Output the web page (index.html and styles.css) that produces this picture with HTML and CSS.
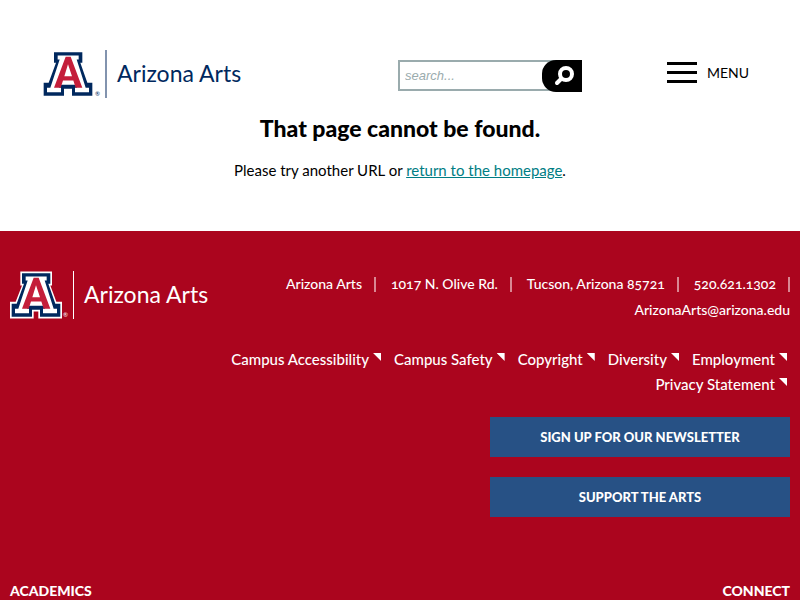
FILE: index.html
```html
<!DOCTYPE html>
<html lang="en">
<head>
<meta charset="utf-8">
<meta name="viewport" content="width=device-width, initial-scale=1">
<title>Page not found | Arizona Arts</title>
<link rel="stylesheet" href="styles.css">
</head>
<body>
<svg class="defs" width="0" height="0" aria-hidden="true">
  <symbol id="block-a" viewBox="0 0 156 141">
    <path class="a-edge" d="M31 0H126V42H121L139 91H156V141H85V120H71V141H0V91H17L36 42H31Z"/>
    <path class="a-navy" d="M36 5H121V37H115L136 97H151V136H90V115H66V136H5V97H20L42 37H36Z"/>
    <path class="a-white" d="M47 15H110V27H104L131 112H141V125H99V112H105L102 103H54L51 112H57V125H15V112H25L53 27H47Z"/>
    <path class="a-red" fill-rule="evenodd" d="M71 19H86L121 112H101L94 90H63L56 112H36ZM78 41L67 77H90Z"/>
  </symbol>
</svg>

<header class="site-header">
  <a class="logo" href="#" aria-label="Arizona Arts home">
    <svg class="logo-mark" aria-hidden="true"><use href="#block-a"/></svg>
    <span class="logo-reg">®</span>
    <span class="logo-name">Arizona Arts</span>
  </a>
  <form class="search" role="search">
    <input class="search-field" type="search" placeholder="search..." aria-label="Search">
    <button class="search-button" type="button" aria-label="Search">
      <svg width="20" height="20" viewBox="0 0 20 20" aria-hidden="true"><circle cx="12" cy="8" r="6" fill="none" stroke="#fff" stroke-width="4"/><path d="M7 13L3 17" stroke="#fff" stroke-width="4" stroke-linecap="round"/></svg>
    </button>
  </form>
  <button class="menu" type="button">
    <svg width="30" height="21" viewBox="0 0 30 21" aria-hidden="true"><path d="M0 0H30V3H0ZM0 9H30V12H0ZM0 18H30V21H0Z"/></svg>
    <span>MENU</span>
  </button>
</header>

<main class="message">
  <h1>That page cannot be found.</h1>
  <p>Please try another URL or <a href="#">return to the homepage</a>.</p>
</main>

<footer class="site-footer">
  <div class="footer-top">
    <a class="logo logo-light" href="#" aria-label="Arizona Arts home">
      <svg class="logo-mark" aria-hidden="true"><use href="#block-a"/></svg>
      <span class="logo-reg">®</span>
      <span class="logo-name">Arizona Arts</span>
    </a>
    <div class="footer-info">
      <ul class="contact">
        <li>Arizona Arts</li>
        <li>1017 N. Olive Rd.</li>
        <li>Tucson, Arizona 85721</li>
        <li>520.621.1302</li>
        <li><a href="#">ArizonaArts@arizona.edu</a></li>
      </ul>
      <ul class="links">
        <li><a href="#">Campus Accessibility</a></li>
        <li><a href="#">Campus Safety</a></li>
        <li><a href="#">Copyright</a></li>
        <li><a href="#">Diversity</a></li>
        <li><a href="#">Employment</a></li>
        <li><a href="#">Privacy Statement</a></li>
      </ul>
      <div class="actions">
        <a href="#">SIGN UP FOR OUR NEWSLETTER</a>
        <a href="#">SUPPORT THE ARTS</a>
      </div>
    </div>
  </div>
  <div class="footer-columns">
    <h2>ACADEMICS</h2>
    <h2>CONNECT</h2>
  </div>
</footer>
</body>
</html>
```
FILE: styles.css
```css
* {
  box-sizing: border-box;
}

body {
  display: flex;
  flex-direction: column;
  min-height: 100vh;
  margin: 0;
  background: #fff;
  color: #000;
  font: 15px/25px Lato, "Open Sans", sans-serif;
}

ul {
  margin: 0;
  padding: 0;
  list-style: none;
}

.defs {
  display: block;
}

.a-edge {
  fill: var(--logo-edge, none);
}

.a-navy {
  fill: #00285e;
}

.a-white {
  fill: #fff;
}

.a-red {
  fill: #c41e3a;
}

/* Header */

.site-header {
  display: flex;
  align-items: center;
  justify-content: space-between;
  padding: 50px 51px 0 42px;
}

.logo {
  display: flex;
  align-items: flex-end;
  height: 48px;
  color: #00285e;
  text-decoration: none;
}

.logo-mark {
  width: 52px;
  height: 48px;
}

.logo-reg {
  width: 11px;
  padding-left: 1px;
  font-size: 6px;
  line-height: 8px;
}

.logo-name {
  height: 48px;
  padding-left: 10px;
  border-left: 2px solid #8293ae;
  font-size: 23px;
  line-height: 46px;
}

.search {
  display: flex;
  width: 184px;
  height: 32px;
  margin-top: 4px;
  margin-left: 72px;
}

.search-field {
  flex: 1;
  min-width: 0;
  height: 31px;
  margin-right: -16px;
  padding: 0 5px;
  border: 2px solid #9aabad;
  border-radius: 0;
  background: #fff;
  font: italic 13px "Liberation Sans", Arial, sans-serif;
  appearance: none;
}

.search-field::placeholder {
  color: #9aabad;
}

.search-button {
  position: relative;
  display: flex;
  align-items: center;
  justify-content: center;
  width: 40px;
  height: 32px;
  padding: 0 0 0 4px;
  border: 0;
  border-radius: 14px 0 0 14px;
  background: #000;
}

.menu {
  display: flex;
  align-items: center;
  align-self: flex-start;
  gap: 10px;
  height: 45px;
  padding: 0;
  border: 0;
  background: none;
  color: #000;
  font: 14px/24px Lato, sans-serif;
}

/* Message */

.message {
  padding: 15px 10px 48px;
  text-align: center;
}

.message h1 {
  margin: 0 0 15px;
  font-size: 23px;
  font-weight: 900;
  line-height: 30px;
}

.message p {
  margin: 0;
  line-height: 25px;
}

.message a {
  color: #007d84;
}

/* Footer */

.site-footer {
  flex: 1;
  padding: 40px 10px 0;
  background: #ab051e;
  color: #fff;
}

.site-footer a {
  color: #fff;
  text-decoration: none;
}

.footer-top {
  display: flex;
}

.logo-light {
  --logo-edge: #fff;
}

.logo-light .logo-name {
  border-left: 1px solid #fff;
}

.footer-info {
  flex: 1;
  font-weight: 500;
}

.contact,
.links {
  display: flex;
  flex-wrap: wrap;
  justify-content: flex-end;
}

.contact {
  column-gap: 15px;
  font-size: 14px;
  line-height: 26px;
  font-variant-numeric: oldstyle-nums;
}

.contact li {
  display: flex;
  align-items: center;
}

.contact li:not(:last-child)::after {
  content: "";
  width: 2px;
  height: 15px;
  margin-left: 12px;
  background: #d98793;
}

.links {
  margin-top: 24px;
  column-gap: 10px;
}

.links a::after {
  content: "";
  display: inline-block;
  width: 8px;
  height: 8px;
  margin: 0 3px 4px 4px;
  background: #fff;
  clip-path: polygon(0 0, 100% 0, 100% 100%);
}

.actions {
  display: grid;
  justify-content: end;
  grid-template-columns: 300px;
  gap: 20px;
  margin-top: 20px;
}

.actions a {
  background: #275185;
  font-size: 13px;
  font-weight: 900;
  line-height: 40px;
  text-align: center;
}

.footer-columns {
  display: flex;
  justify-content: space-between;
  margin-top: 61px;
}

.footer-columns h2 {
  margin: 0;
  font-size: 14px;
  font-weight: 900;
  line-height: 25px;
}
```
